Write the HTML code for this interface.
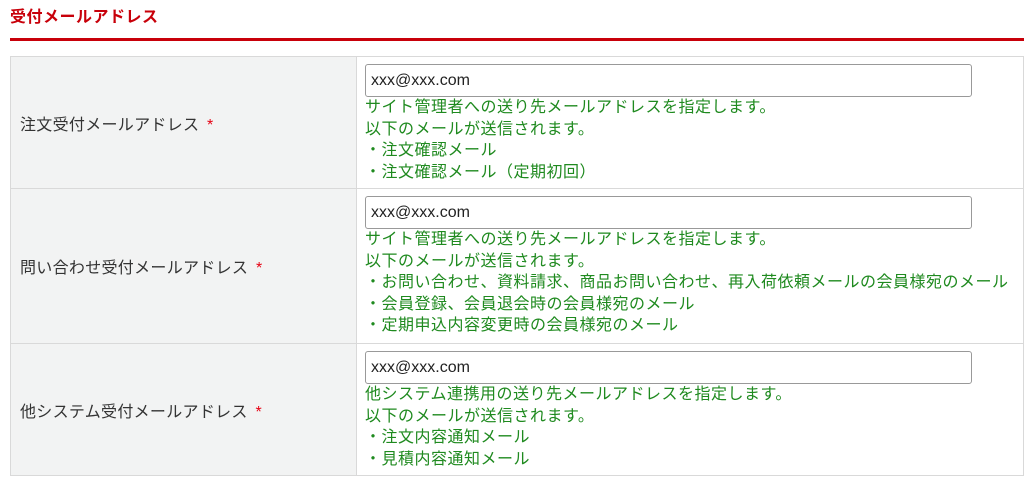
<!DOCTYPE html>
<html><head><meta charset="utf-8"><style>
*{margin:0;padding:0;box-sizing:border-box}
body{width:1024px;height:478px;background:#fff;font-family:"Liberation Sans","Noto Sans CJK JP",sans-serif;position:relative;overflow:hidden}
h2{position:absolute;left:10px;top:8px;font-size:16px;font-weight:bold;color:#c8000a;line-height:20px;letter-spacing:0.5px}
.line{position:absolute;left:10px;top:38px;width:1014px;height:3px;background:#c8000a}
table{position:absolute;left:10px;top:56px;width:1014px;border-collapse:collapse}
td{border:1px solid #d9d9d9;vertical-align:middle}
td.l{width:346px;background:#f2f3f3;color:#333;font-size:16px;padding-left:9px;letter-spacing:0.3px}
td.l span{color:#e60012;margin-left:3px}
td.r{vertical-align:top;padding:7px 0 0 8px;color:#1f8a1f;font-size:16px;line-height:21.5px;letter-spacing:0.5px}
.in{width:607px;height:33px;border:1px solid #999;border-radius:3px;color:#222;font-size:16px;line-height:31px;padding-left:5px;letter-spacing:0}
</style></head><body>
<h2>受付メールアドレス</h2>
<div class="line"></div>
<table>
<tr style="height:132px"><td class="l">注文受付メールアドレス <span>*</span></td><td class="r"><div class="in">xxx@xxx.com</div>サイト管理者への送り先メールアドレスを指定します。<br>以下のメールが送信されます。<br>・注文確認メール<br>・注文確認メール（定期初回）</td></tr>
<tr style="height:155px"><td class="l">問い合わせ受付メールアドレス <span>*</span></td><td class="r"><div class="in">xxx@xxx.com</div>サイト管理者への送り先メールアドレスを指定します。<br>以下のメールが送信されます。<br>・お問い合わせ、資料請求、商品お問い合わせ、再入荷依頼メールの会員様宛のメール<br>・会員登録、会員退会時の会員様宛のメール<br>・定期申込内容変更時の会員様宛のメール</td></tr>
<tr style="height:132px"><td class="l">他システム受付メールアドレス <span>*</span></td><td class="r"><div class="in">xxx@xxx.com</div>他システム連携用の送り先メールアドレスを指定します。<br>以下のメールが送信されます。<br>・注文内容通知メール<br>・見積内容通知メール</td></tr>
</table>
</body></html>
